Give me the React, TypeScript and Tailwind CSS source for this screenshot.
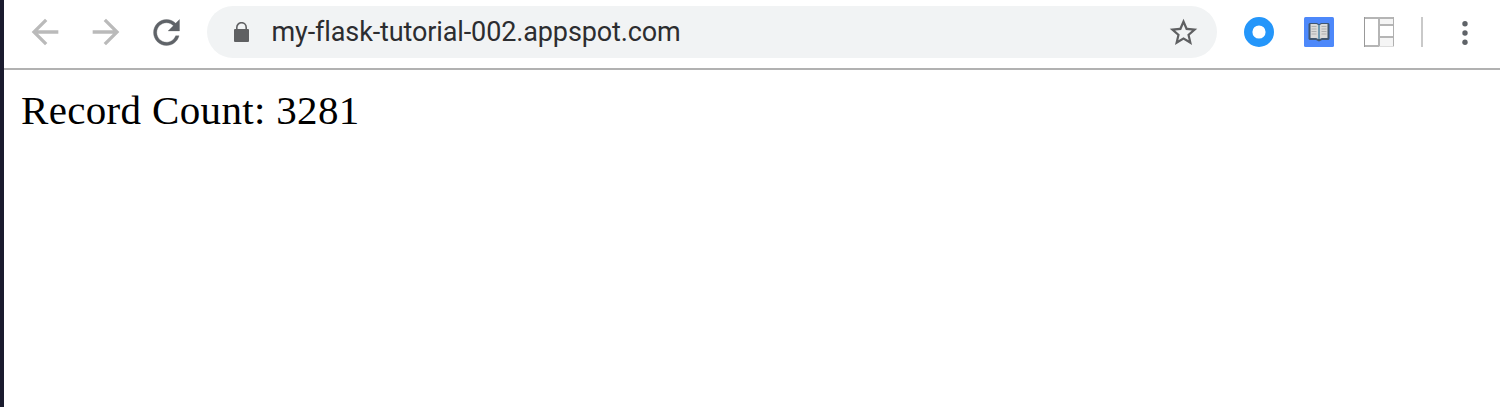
import React from "react";

type IconProps = { d: string; className: string };

function Icon({ d, className }: IconProps) {
  return (
    <svg viewBox="0 0 24 24" fill="currentColor" className={`block shrink-0 ${className}`}>
      <path d={d} />
    </svg>
  );
}

const BACK = "M20 11H7.83l5.59-5.59L12 4l-8 8 8 8 1.41-1.41L7.83 13H20v-2z";
const FORWARD = "M12 4l-1.41 1.41L16.17 11H4v2h12.17l-5.58 5.59L12 20l8-8z";
const RELOAD =
  "M17.65 6.35C16.2 4.9 14.21 4 12 4c-4.42 0-7.99 3.58-7.99 8s3.57 8 7.99 8c3.73 0 6.84-2.55 7.73-6h-2.08c-.82 2.33-3.04 4-5.65 4-3.31 0-6-2.69-6-6s2.69-6 6-6c1.66 0 3.14.69 4.22 1.78L13 11h7V4l-2.35 2.35z";
const STAR =
  "M22 9.24l-7.19-.62L12 2 9.19 8.63 2 9.24l5.46 4.73L5.82 21 12 17.27 18.18 21l-1.63-7.03L22 9.24zM12 15.4l-3.76 2.27 1-4.28-3.32-2.88 4.38-.38L12 6.1l1.71 4.04 4.38.38-3.32 2.88 1 4.28L12 15.4z";

function LockIcon() {
  return (
    <svg viewBox="0 0 15 20" className="block h-5 w-[15px] shrink-0">
      <path d="M2.8 8V5.400a4.700 4.700 0 0 1 9.400 0V8" fill="none" stroke="#5f6062" strokeWidth="1.600" />
      <rect x="0" y="7" width="15" height="13" rx="1" fill="#5f6062" />
    </svg>
  );
}

function BookIcon() {
  return (
    <svg viewBox="0 0 30 30" className="block size-[30px] shrink-0">
      <rect width="30" height="30" rx="1.500" fill="#4d88fa" />
      <path d="M4.500 7l1-1h7.500l2 1.200L17 6h7.500l1 1v15l-1 1h-6.500L15 24.500 12 23H5.500l-1-1z" fill="#3f5670" />
      <path d="M6.500 7h6l1.700 1v14l-2-1H6.500z" fill="#dadad8" />
      <path d="M23.500 7h-6l-1.700 1v14l2-1h5.700z" fill="#dadad8" />
      <path d="M7.500 9.500h5M7.500 12h5M7.500 14.500h5M7.500 17h5M17.500 9.500h5M17.500 12h5M17.500 14.500h5M17.500 17h5" stroke="#b0b0b0" />
      <path d="M15 8v14" stroke="#75a5bd" strokeWidth="1.600" />
    </svg>
  );
}

function LayoutIcon() {
  return (
    <svg viewBox="0 0 30 30" className="block size-[30px] shrink-0" fill="none">
      <rect x="15" y="0" width="15" height="7" fill="#f5f5f5" />
      <rect x="15" y="21" width="15" height="9" fill="#f5f5f5" />
      <path d="M0 1h30M15 8h15M15 20h15M0 29h15" stroke="#b5b5b5" strokeWidth="2" />
      <path d="M.5 0v30" stroke="#999" />
      <path d="M15 0v30" stroke="#b5b5b5" strokeWidth="2" />
      <path d="M29.500 0v30" stroke="#b0b0b0" />
      <path d="M15 29.500h15" stroke="#ddd" />
    </svg>
  );
}

export default function App() {
  return (
    <div className="flex h-[407px] w-full overflow-hidden bg-white">
      <div className="w-1 shrink-0 bg-[#1a1b2e]" />
      <div className="flex min-w-0 grow flex-col">
        <header className="flex h-[70px] shrink-0 items-start border-b-2 border-[#b1b1b1] pt-1.5">
          <div className="flex h-[52px] w-full items-center">
            <Icon d={BACK} className="ml-[21px] size-10 text-[#bababa]" />
            <Icon d={FORWARD} className="ml-[21px] size-10 text-[#bababa]" />
            <Icon d={RELOAD} className="ml-[21px] size-[39px] stroke-[#5f6368] stroke-[0.2] text-[#5f6368]" />
            <div className="ml-[21px] flex h-[52px] w-[1010px] items-center rounded-full bg-[#f1f3f4] pr-[17px] pl-[27px]">
              <LockIcon />
              <span className="ml-[22.500px] grow font-['Roboto',sans-serif] text-[27px] leading-8 tracking-[-0.12px] whitespace-nowrap text-[#2c2d30]">
                my-flask-tutorial-002.appspot.com
              </span>
              <Icon d={STAR} className="size-[33px] text-[#5f6062]" />
            </div>
            <svg viewBox="0 0 30 30" className="ml-[27px] block size-[30px] shrink-0">
              <circle cx="15" cy="15" r="10.800" fill="#fff" stroke="#2496fa" strokeWidth="8.400" />
            </svg>
            <div className="ml-[30px]">
              <BookIcon />
            </div>
            <div className="ml-[30px]">
              <LayoutIcon />
            </div>
            <div className="ml-[27px] h-[30px] w-0.5 bg-[#c9c9c9]" />
            <svg viewBox="0 0 6 24" fill="#5f6368" className="mt-0.5 ml-[39px] block h-6 w-1.5 shrink-0">
              <circle cx="3" cy="2.700" r="2.700" />
              <circle cx="3" cy="12" r="2.700" />
              <circle cx="3" cy="21.300" r="2.700" />
            </svg>
          </div>
        </header>
        <main className="pt-[17px] pl-[17px]">
          <p className="font-['Liberation_Serif',serif] text-[41px] leading-[47px] tracking-[0.34px] whitespace-nowrap text-black">
            Record Count: 3281
          </p>
        </main>
      </div>
    </div>
  );
}
